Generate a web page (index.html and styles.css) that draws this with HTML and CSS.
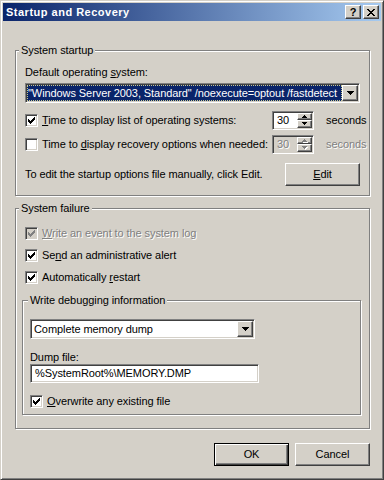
FILE: index.html
```html
<!DOCTYPE html>
<html lang="en">
<head>
    <meta charset="UTF-8">
    <title>Startup and Recovery</title>
    <link rel="stylesheet" href="styles.css">
</head>
<body>
    <div class="venster">
        <div class="titelbalk">
            <span class="titel">Startup and Recovery</span>
            <div class="titelknoppen">
                <span class="titelknop vraag">?</span>
                <span class="titelknop">
                    <svg width="8" height="7" viewBox="0 0 8 7"><path d="M0 0h2v1h-2zM6 0h2v1h-2zM1 1h2v1h-2zM5 1h2v1h-2zM2 2h4v1h-4zM3 3h2v1h-2zM2 4h4v1h-4zM1 5h2v1h-2zM5 5h2v1h-2zM0 6h2v1h-2zM6 6h2v1h-2z"/></svg>
                </span>
            </div>
        </div>

        <div class="inhoud">
            <fieldset class="groep">
                <legend>System startup</legend>
                <div class="opstart">
                    <div class="label">Default operating <u>s</u>ystem:</div>
                    <div class="combo combo-os">
                        <span class="combo-waarde geselecteerd">"Windows Server 2003, Standard" /noexecute=optout /fastdetect</span>
                        <span class="combo-pijl"><svg width="7" height="4" viewBox="0 0 7 4"><path d="M0 0h7v1h-7zM1 1h5v1h-5zM2 2h3v1h-3zM3 3h1v1h-1z"/></svg></span>
                    </div>

                    <div class="tijd-rij">
                        <div class="vinkje">
                            <span class="vak"><svg width="7" height="7" viewBox="0 0 7 7"><path d="M6 0h1v1h-1zM5 1h2v1h-2zM0 2h1v1h-1zM4 2h3v1h-3zM0 3h2v1h-2zM3 3h3v1h-3zM0 4h5v1h-5zM1 5h3v1h-3zM2 6h1v1h-1z"/></svg></span>
                            <span><u>T</u>ime to display list of operating systems:</span>
                        </div>
                        <div class="spin">
                            <span class="spin-waarde">30</span>
                            <span class="spin-knoppen">
                                <span class="spin-knop"><svg width="5" height="3" viewBox="0 0 5 3"><path d="M2 0h1v1h-1zM1 1h3v1h-3zM0 2h5v1h-5z"/></svg></span>
                                <span class="spin-knop"><svg width="5" height="3" viewBox="0 0 5 3"><path d="M0 0h5v1h-5zM1 1h3v1h-3zM2 2h1v1h-1z"/></svg></span>
                            </span>
                        </div>
                        <span>seconds</span>
                    </div>

                    <div class="tijd-rij">
                        <div class="vinkje">
                            <span class="vak"></span>
                            <span>Time to <u>d</u>isplay recovery options when needed:</span>
                        </div>
                        <div class="spin uit">
                            <span class="spin-waarde">30</span>
                            <span class="spin-knoppen">
                                <span class="spin-knop"><svg width="5" height="3" viewBox="0 0 5 3"><path d="M2 0h1v1h-1zM1 1h3v1h-3zM0 2h5v1h-5z"/></svg></span>
                                <span class="spin-knop"><svg width="5" height="3" viewBox="0 0 5 3"><path d="M0 0h5v1h-5zM1 1h3v1h-3zM2 2h1v1h-1z"/></svg></span>
                            </span>
                        </div>
                        <span class="grijs">seconds</span>
                    </div>

                    <div class="edit-rij">
                        <span>To edit the startup options file manually, click Edit.</span>
                        <span class="knop"><span><u>E</u>dit</span></span>
                    </div>
                </div>
            </fieldset>

            <fieldset class="groep storing-groep">
                <legend>System failure</legend>
                <div class="storing">
                    <div class="vinkje">
                        <span class="vak uit"><svg width="7" height="7" viewBox="0 0 7 7"><path d="M6 0h1v1h-1zM5 1h2v1h-2zM0 2h1v1h-1zM4 2h3v1h-3zM0 3h2v1h-2zM3 3h3v1h-3zM0 4h5v1h-5zM1 5h3v1h-3zM2 6h1v1h-1z"/></svg></span>
                        <span class="grijs"><u>W</u>rite an event to the system log</span>
                    </div>
                    <div class="vinkje">
                        <span class="vak"><svg width="7" height="7" viewBox="0 0 7 7"><path d="M6 0h1v1h-1zM5 1h2v1h-2zM0 2h1v1h-1zM4 2h3v1h-3zM0 3h2v1h-2zM3 3h3v1h-3zM0 4h5v1h-5zM1 5h3v1h-3zM2 6h1v1h-1z"/></svg></span>
                        <span>Se<u>n</u>d an administrative alert</span>
                    </div>
                    <div class="vinkje">
                        <span class="vak"><svg width="7" height="7" viewBox="0 0 7 7"><path d="M6 0h1v1h-1zM5 1h2v1h-2zM0 2h1v1h-1zM4 2h3v1h-3zM0 3h2v1h-2zM3 3h3v1h-3zM0 4h5v1h-5zM1 5h3v1h-3zM2 6h1v1h-1z"/></svg></span>
                        <span>Automatically <u>r</u>estart</span>
                    </div>

                    <fieldset class="groep debug">
                        <legend>Write debugging information</legend>
                        <div class="debug-body">
                            <div class="combo combo-dump">
                                <span class="combo-waarde">Complete memory dump</span>
                                <span class="combo-pijl"><svg width="7" height="4" viewBox="0 0 7 4"><path d="M0 0h7v1h-7zM1 1h5v1h-5zM2 2h3v1h-3zM3 3h1v1h-1z"/></svg></span>
                            </div>
                            <div class="label dump-label">Dump file:</div>
                            <div class="veld">%SystemRoot%\MEMORY.DMP</div>
                            <div class="vinkje overschrijf">
                                <span class="vak"><svg width="7" height="7" viewBox="0 0 7 7"><path d="M6 0h1v1h-1zM5 1h2v1h-2zM0 2h1v1h-1zM4 2h3v1h-3zM0 3h2v1h-2zM3 3h3v1h-3zM0 4h5v1h-5zM1 5h3v1h-3zM2 6h1v1h-1z"/></svg></span>
                                <span><u>O</u>verwrite any existing file</span>
                            </div>
                        </div>
                    </fieldset>
                </div>
            </fieldset>

            <div class="knoppen">
                <span class="knop standaard"><span>OK</span></span>
                <span class="knop"><span>Cancel</span></span>
            </div>
        </div>
    </div>
</body>
</html>
```

FILE: styles.css
```css
body {
    margin: 0;
    font-family: "Liberation Sans", Arial, sans-serif;
    font-size: 11px;
    line-height: 13px;
    letter-spacing: -0.08px;
    color: #000;
    background-color: #d4d0c8;
}

u {
    text-decoration-thickness: 1px;
    text-underline-offset: 1px;
}

svg {
    display: block;
    fill: currentColor;
}

.venster {
    width: 384px;
    height: 480px;
    box-sizing: border-box;
    padding: 2px;
    border: 1px solid;
    border-color: #d4d0c8 #404040 #404040 #d4d0c8;
    box-shadow: inset 1px 1px 0 #fff, inset -1px -1px 0 #808080;
    display: flex;
    flex-direction: column;
}

.titelbalk {
    height: 18px;
    display: flex;
    align-items: center;
    justify-content: space-between;
    padding: 0 2px 0 3px;
    background: linear-gradient(to right, #0a246a, #a6caf0);
}

.titel {
    color: #fff;
    font-weight: bold;
    letter-spacing: 0.5px;
}

.titelknoppen {
    display: flex;
    gap: 2px;
}

/* verhoogde knoppen */
.titelknop,
.knop,
.combo-pijl,
.spin-knop {
    box-sizing: border-box;
    border: 1px solid;
    border-color: #fff #404040 #404040 #fff;
    box-shadow: inset -1px -1px 0 #808080;
    background-color: #d4d0c8;
    display: flex;
    align-items: center;
    justify-content: center;
}

.titelknop {
    width: 16px;
    height: 14px;
    font-weight: bold;
    line-height: 12px;
}

/* verzonken velden */
.combo,
.spin,
.veld,
.vak {
    box-sizing: border-box;
    border: 1px solid;
    border-color: #808080 #fff #fff #808080;
    box-shadow: inset 1px 1px 0 #404040, inset -1px -1px 0 #d4d0c8;
    background-color: #fff;
}

.inhoud {
    flex: 1;
    display: flex;
    flex-direction: column;
    padding: 23px 11px 0 12px;
}

.groep {
    margin: 0;
    padding: 0;
    min-width: 0;
    border: 1px solid #808080;
    box-shadow: inset 1px 1px 0 #fff, 1px 1px 0 #fff;
}

.groep legend {
    margin-left: 3px;
    padding: 0 2px;
    line-height: 13px;
    background-color: #d4d0c8;
}

.opstart {
    padding: 9px 9px 9px 9px;
}

.combo {
    display: flex;
    height: 20px;
    padding: 1px;
}

.combo-os {
    margin-top: 4px;
}

.combo-waarde {
    flex: 1;
    min-width: 0;
    overflow: hidden;
    white-space: nowrap;
    padding-left: 2px;
    line-height: 16px;
}

.geselecteerd {
    padding-left: 1px;
    color: #fff;
    background-color: #0a246a;
    outline: 1px dotted #c8c890;
    outline-offset: -1px;
}

.combo-pijl {
    width: 16px;
    height: 16px;
}

.tijd-rij {
    display: grid;
    grid-template-columns: 235px 42px auto;
    column-gap: 12px;
    align-items: center;
    height: 20px;
    margin-top: 7px;
}

.tijd-rij + .tijd-rij {
    margin-top: 4px;
}

.vinkje {
    display: flex;
    align-items: center;
    gap: 4px;
    white-space: nowrap;
}

.vak {
    width: 13px;
    height: 13px;
    flex-shrink: 0;
    display: flex;
    align-items: center;
    justify-content: center;
}

.vak.uit {
    background-color: #d4d0c8;
    color: #808080;
}

.grijs {
    color: #808080;
    text-shadow: 1px 1px 0 #fff;
}

.spin {
    display: flex;
    height: 19px;
    padding: 1px;
}

.spin-waarde {
    flex: 1;
    padding-left: 3px;
    line-height: 15px;
}

.spin-knoppen {
    width: 15px;
    display: flex;
    flex-direction: column;
}

.spin-knop {
    flex: 1;
}

.spin.uit {
    background-color: #d4d0c8;
}

.spin.uit .spin-waarde,
.spin.uit .spin-knop {
    color: #808080;
    text-shadow: 1px 1px 0 #fff;
}

.spin.uit svg {
    filter: drop-shadow(1px 1px 0 #fff);
}

.edit-rij {
    display: flex;
    align-items: center;
    justify-content: space-between;
    margin-top: 9px;
}

.knop {
    width: 75px;
    height: 23px;
}

.knop.standaard {
    border-color: #000;
    box-shadow: inset 1px 1px 0 #fff, inset -1px -1px 0 #404040, inset -2px -2px 0 #808080;
}

.storing-groep {
    margin-top: 6px;
}

.storing {
    display: flex;
    flex-direction: column;
    padding: 12px 8px 13px 6px;
}

.storing > .vinkje {
    margin-left: 3px;
}

.storing > .vinkje + .vinkje {
    margin-top: 9px;
}

.debug {
    margin-top: 10px;
}

.debug legend {
    margin-left: 5px;
}

.debug-body {
    padding: 12px 7px 6px 7px;
}

.combo-dump {
    width: 225px;
}

.dump-label {
    margin-top: 12px;
}

.veld {
    width: 229px;
    height: 19px;
    padding-left: 4px;
    line-height: 17px;
}

.overschrijf {
    margin-top: 12px;
}

.knoppen {
    display: flex;
    justify-content: flex-end;
    gap: 6px;
    margin-top: 14px;
}
```
